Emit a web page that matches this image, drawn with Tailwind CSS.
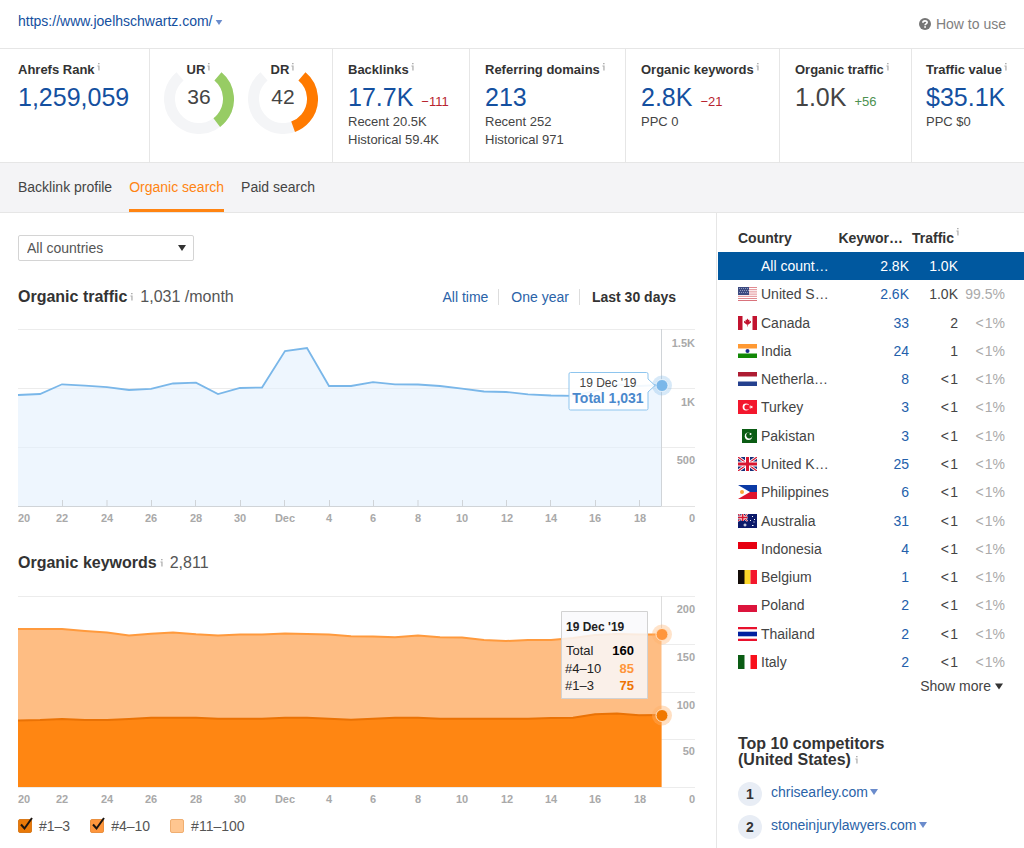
<!DOCTYPE html>
<html lang="en">
<head>
<meta charset="utf-8">
<meta name="viewport" content="width=device-width, initial-scale=1">
<title>Site overview</title>
<script src="https://cdn.jsdelivr.net/npm/@tailwindcss/browser@4"></script>
</head>
<body class="bg-white font-['Liberation_Sans',Arial,sans-serif] text-sm text-[#444]">

<!-- Shared symbols -->
<svg class="hidden" aria-hidden="true">
  <symbol id="info" viewBox="0 0 4 8"><path fill="#b0b0b0" d="M1 0h1.600v1.200H1zM.4 2.600h2.200V7.400H1.300V3.500H.4z"/></symbol>
  <symbol id="caret" viewBox="0 0 8 6"><path d="M0 0h8L4 6z"/></symbol>
  <symbol id="us" viewBox="0 0 19 14"><path fill="#fff" d="M0 0h19v14H0z"/><path stroke="#e08a90" d="M0 .5h19M0 2.700h19M0 4.900h19M0 7.100h19M0 9.300h19M0 11.500h19"/><path stroke="#d9737c" d="M0 13.500h19"/><path fill="#3c4a80" d="M0 0h11v8H0z"/><path stroke="#8f99bd" stroke-dasharray="1 1" d="M1 1.500h9M2 3.500h9M1 5.500h9"/></symbol>
  <symbol id="ca" viewBox="0 0 19 14"><path fill="#fff" d="M0 0h19v14H0z"/><path fill="#c2132f" d="M0 0h4.500v14H0zM14.500 0H19v14h-4.500zM9.500 2.500l1 1.600 1-.4-.2 2 1.700-.9 0 1.600-2.500 2.200-.7 0v1.900h-.6V8.600h-.7L6 6.400V4.800l1.700.9-.2-2 1 .4z"/></symbol>
  <symbol id="in" viewBox="0 0 19 14"><path fill="#fff" d="M0 0h19v14H0z"/><path fill="#f93" d="M0 0h19v4.500H0z"/><path fill="#128807" d="M0 9.500h19V14H0z"/><circle cx="9.500" cy="7" r="2" fill="#1a2a8c"/></symbol>
  <symbol id="nl" viewBox="0 0 19 14"><path fill="#fff" d="M0 0h19v14H0z"/><path fill="#ae1c32" d="M0 0h19v4.500H0z"/><path fill="#24408e" d="M0 9.500h19V14H0z"/></symbol>
  <symbol id="tr" viewBox="0 0 19 14"><path fill="#f3172d" d="M0 0h19v14H0z"/><circle cx="8" cy="7" r="3.400" fill="#fff"/><circle cx="9" cy="7" r="2.600" fill="#f3172d"/><path fill="#fff" d="M11 7l1.500-.5.1-1.400.9 1.100 1.400-.4-.8 1.200.8 1.200-1.400-.4-.9 1.100-.1-1.400z"/></symbol>
  <symbol id="pk" viewBox="0 0 19 14"><path fill="#fff" d="M0 0h19v14H0z"/><path fill="#0b5c14" d="M4 0h15v14H4z"/><circle cx="10.500" cy="7.300" r="3.700" fill="#fff"/><circle cx="11.300" cy="6.300" r="3.100" fill="#0b5c14"/><circle cx="12.500" cy="5" r="1" fill="#fff"/></symbol>
  <symbol id="gb" viewBox="0 0 19 14"><path fill="#17307a" d="M0 0h19v14H0z"/><path stroke="#fff" stroke-width="3" d="M0 0l19 14M19 0L0 14"/><path stroke="#d8152f" stroke-width="1.200" d="M0 0l19 14M19 0L0 14"/><path stroke="#fff" stroke-width="5" d="M9.500 0v14M0 7h19"/><path stroke="#d8152f" stroke-width="3" d="M9.500 0v14M0 7h19"/></symbol>
  <symbol id="ph" viewBox="0 0 19 14"><path fill="#0b3aa5" d="M0 0h19v7H0z"/><path fill="#e0142c" d="M0 7h19v7H0z"/><path fill="#fff" d="M0 0l12 7L0 14z"/><circle cx="4" cy="7" r="2" fill="#f9a63a"/></symbol>
  <symbol id="au" viewBox="0 0 19 14"><path fill="#0c1a6b" d="M0 0h19v14H0z"/><path stroke="#fff" stroke-width="1.800" d="M0 0l9.500 7M9.500 0L0 7"/><path stroke="#d8152f" stroke-width="1" d="M0 0l9.500 7M9.500 0L0 7"/><path stroke="#fff" stroke-width="2.600" d="M4.700 0v7M0 3.500h9.500"/><path stroke="#d8152f" stroke-width="1.600" d="M4.700 0v7M0 3.500h9.500"/><path fill="#fff" d="M6.500 9.500h1v1h1v1h-1v1h-1v-1h-1v-1h1zM14 2h1v1h-1zM12 6h1v1h-1zM16 5h1v1h-1zM14 11h1.500v1H14zM15.500 7.500h1v1h-1z"/></symbol>
  <symbol id="id" viewBox="0 0 19 14"><path fill="#fff" d="M0 0h19v14H0z"/><path fill="#e70011" d="M0 0h19v7H0z"/></symbol>
  <symbol id="be" viewBox="0 0 19 14"><path fill="#130c08" d="M0 0h7v14H0z"/><path fill="#fcd72a" d="M6.500 0h6v14h-6z"/><path fill="#f3172d" d="M12.500 0H19v14h-6.500z"/></symbol>
  <symbol id="pl" viewBox="0 0 19 14"><path fill="#fff" d="M0 0h19v14H0z"/><path fill="#dc143c" d="M0 7h19v7H0z"/></symbol>
  <symbol id="th" viewBox="0 0 19 14"><path fill="#fff" d="M0 0h19v14H0z"/><path fill="#e8112d" d="M0 0h19v2.200H0zM0 11.800h19V14H0z"/><path fill="#00209f" d="M0 4.700h19v4.600H0z"/></symbol>
  <symbol id="it" viewBox="0 0 19 14"><path fill="#fff" d="M0 0h19v14H0z"/><path fill="#0b5c14" d="M0 0h6.500v14H0z"/><path fill="#f8101c" d="M12.500 0H19v14h-6.500z"/></symbol>
</svg>

<header class="flex h-12 items-center justify-between pr-[18px] pl-[18px]">
  <a href="#" class="flex items-center gap-0.5 pb-1.5 text-[#1450a0]">https://www.joelhschwartz.com/
    <svg class="mt-0.5 h-[5px] w-2 fill-[#6b8ccc]"><use href="#caret"/></svg></a>
  <a href="#" class="flex items-center gap-[5px] text-[#808080]">
    <svg class="size-3" viewBox="0 0 12 12"><circle cx="6" cy="6" r="6" fill="#757575"/><path fill="none" stroke="#fff" stroke-width="1.700" d="M3.900 4.800c0-2.600 4.200-2.500 4.200-.3 0 1.400-2 1.300-2 2.700"/><path fill="#fff" d="M5.200 8.200h1.800v1.600H5.200z"/></svg>
    How to use</a>
</header>

<section class="grid h-[115px] grid-cols-[150fr_183fr_137fr_156fr_154fr_132fr_112fr] border-y border-[#e6e6e6] text-[13px] leading-[18px] *:border-r *:border-[#e6e6e6] *:pt-3">
  <div class="pl-[18px]">
    <h2 class="flex gap-0.5 font-bold text-[#333]">Ahrefs Rank<svg class="mt-0.5 h-2 w-1"><use href="#info"/></svg></h2>
    <a href="#" class="mt-0.5 block text-[25px] leading-8 text-[#1450a0]">1,259,059</a>
  </div>
  <div class="flex gap-3.5 pl-3.5">
    <div class="relative h-[74px] w-[70px]">
      <svg class="absolute top-[3px] left-0 size-[70px]" viewBox="0 0 70 70" fill="none" stroke-width="11"><g transform="rotate(-50 35 35)"><circle cx="35" cy="35" r="29.500" pathLength="360" stroke="#f4f5f7" stroke-dasharray="280 80"/><circle cx="35" cy="35" r="29.500" pathLength="360" stroke="#97cc64" stroke-dasharray="103 257"/></g></svg>
      <h2 class="relative flex justify-center gap-0.5 font-bold text-[#333]">UR<svg class="mt-0.5 h-2 w-1"><use href="#info"/></svg></h2>
      <p class="relative mt-0.5 text-center text-[21px] leading-8">36</p>
    </div>
    <div class="relative h-[74px] w-[70px]">
      <svg class="absolute top-[3px] left-0 size-[70px]" viewBox="0 0 70 70" fill="none" stroke-width="11"><g transform="rotate(-50 35 35)"><circle cx="35" cy="35" r="29.500" pathLength="360" stroke="#f4f5f7" stroke-dasharray="280 80"/><circle cx="35" cy="35" r="29.500" pathLength="360" stroke="#ff7a00" stroke-dasharray="120 240"/></g></svg>
      <h2 class="relative flex justify-center gap-0.5 font-bold text-[#333]">DR<svg class="mt-0.5 h-2 w-1"><use href="#info"/></svg></h2>
      <p class="relative mt-0.5 text-center text-[21px] leading-8">42</p>
    </div>
  </div>
  <div class="pl-[15px]">
    <h2 class="flex gap-0.5 font-bold text-[#333]">Backlinks<svg class="mt-0.5 h-2 w-1"><use href="#info"/></svg></h2>
    <p class="mt-0.5 flex h-8 items-baseline gap-2"><a href="#" class="text-[25px] leading-8 text-[#1450a0]">17.7K</a><span class="text-[#b8242f]">−111</span></p>
    <p>Recent 20.5K</p><p>Historical 59.4K</p>
  </div>
  <div class="pl-[15px]">
    <h2 class="flex gap-0.5 font-bold whitespace-nowrap text-[#333]">Referring domains<svg class="mt-0.5 h-2 w-1"><use href="#info"/></svg></h2>
    <a href="#" class="mt-0.5 block text-[25px] leading-8 text-[#1450a0]">213</a>
    <p>Recent 252</p><p>Historical 971</p>
  </div>
  <div class="pl-[15px]">
    <h2 class="flex gap-0.5 font-bold whitespace-nowrap text-[#333]">Organic keywords<svg class="mt-0.5 h-2 w-1"><use href="#info"/></svg></h2>
    <p class="mt-0.5 flex h-8 items-baseline gap-2"><a href="#" class="text-[25px] leading-8 text-[#1450a0]">2.8K</a><span class="text-[#b8242f]">−21</span></p>
    <p>PPC 0</p>
  </div>
  <div class="pl-[15px]">
    <h2 class="flex gap-0.5 font-bold whitespace-nowrap text-[#333]">Organic traffic<svg class="mt-0.5 h-2 w-1"><use href="#info"/></svg></h2>
    <p class="mt-0.5 flex h-8 items-baseline gap-2"><span class="text-[25px] leading-8">1.0K</span><span class="text-[#4c9150]">+56</span></p>
  </div>
  <div class="border-r-0! pl-3.5">
    <h2 class="flex gap-0.5 font-bold whitespace-nowrap text-[#333]">Traffic value<svg class="mt-0.5 h-2 w-1"><use href="#info"/></svg></h2>
    <a href="#" class="mt-0.5 block text-[25px] leading-8 text-[#1450a0]">$35.1K</a>
    <p>PPC $0</p>
  </div>
</section>

<nav class="flex h-[50px] items-stretch gap-[17px] border-b border-[#e6e6e6] bg-[#f4f4f6] pl-[18px] leading-[48px] text-[#444]">
  <a href="#">Backlink profile</a>
  <a href="#" class="border-b-[3px] border-[#ff8412] text-[#ff8412]">Organic search</a>
  <a href="#">Paid search</a>
</nav>

<main class="flex min-h-[635px]">
  <section class="min-w-0 flex-1 pt-[22px] pr-[21px] pl-[18px]">
    <div class="relative h-[26px] w-44">
      <select aria-label="Country" class="h-[26px] w-full appearance-none rounded-xs border border-[#d4d4d4] bg-white pl-2 text-[#555]"><option>All countries</option></select>
      <svg class="pointer-events-none absolute top-[10px] right-2 h-1.5 w-2 fill-[#333]"><use href="#caret"/></svg>
    </div>

    <div class="mt-6 flex h-6 items-center justify-between">
      <h2 class="flex items-center text-[#555]"><b class="text-base text-[#333]">Organic traffic</b><svg class="mr-1.5 ml-[3px] h-2 w-1"><use href="#info"/></svg><span class="text-base">1,031 /month</span></h2>
      <div class="flex items-center divide-x divide-[#ddd] pr-[19px] leading-4">
        <button class="pr-2.5 text-[#2a63a8]">All time</button>
        <button class="pr-2.5 pl-3 text-[#2a63a8]">One year</button>
        <button class="pl-3 font-bold text-[#333]">Last 30 days</button>
      </div>
    </div>

    <!-- Organic traffic -->
    <svg class="mt-4 block w-full overflow-visible" viewBox="0 0 677 202" role="img" aria-label="Organic traffic, last 30 days">
      <path stroke="#ececec" d="M0 4.500h677M0 63.500h677M0 122.500h677"/>
      <path fill="#e3f0fd" fill-opacity=".6" d="M0 181V70L22 69 44 59.300 67 60.700 89 62.200 111 65 133 63.800 155 58.500 178 57.600 200 69 222 63 244 62.500 267 26 289 23 311 61 333 61 355 57.200 377 59.300 400 59.500 422 61 444 63.700 466 66.500 488 67 510 69.300 533 70.500 555 70.800 577 66 599 59.500 621 61 643 60V181z"/>
      <path stroke="#d0d4d8" fill="none" d="M0 181.500h643.500V4"/><path stroke="#e2e2e2" d="M644 181.500h33"/>
      <path stroke="#d0d4d8" d="M44.500 175v6M89 175v6M133.500 175v6M177.500 175v6M222.500 175v6M266.500 175v6M311.500 175v6M355.500 175v6M400 175v6M444.500 175v6M488.500 175v6M532.500 175v6M577.500 175v6M621.500 175v6"/>
      <path fill="none" stroke="#7ab7e9" stroke-width="1.800" d="M0 70L22 69 44 59.300 67 60.700 89 62.200 111 65 133 63.800 155 58.500 178 57.600 200 69 222 63 244 62.500 267 26 289 23 311 61 333 61 355 57.200 377 59.300 400 59.500 422 61 444 63.700 466 66.500 488 67 510 69.300 533 70.500 555 70.800 577 66 599 59.500 621 61 643 60"/>
      <circle cx="644" cy="60.500" r="10" fill="#7ab7e9" fill-opacity=".3"/><circle cx="644" cy="60.500" r="6" fill="#7ab7e9" stroke="#fff" stroke-opacity=".7"/>
      <path fill="#fff" fill-opacity=".9" stroke="#8ec5ee" d="M552.500 47.500h76q1.500 0 1.500 1.500v5l7 6.500-7 6.500v16.500q0 1.500-1.500 1.500h-76q-1.500 0-1.500-1.500v-34.500q0-1.500 1.500-1.500z"/>
      <text x="590" y="62" text-anchor="middle" class="fill-[#444] text-[12px]">19 Dec '19</text>
      <text x="590" y="78" text-anchor="middle" class="fill-[#4a88cc] text-[14px] font-bold">Total 1,031</text>
      <g class="fill-[#a9a9a9] text-[11px] font-bold">
        <g text-anchor="end"><text x="677" y="22">1.5K</text><text x="677" y="81">1K</text><text x="677" y="139">500</text><text x="677" y="197">0</text></g>
        <g text-anchor="middle"><text x="6" y="197">20</text><text x="44" y="197">22</text><text x="89" y="197">24</text><text x="133" y="197">26</text><text x="178" y="197">28</text><text x="222" y="197">30</text><text x="267" y="197">Dec</text><text x="311" y="197">4</text><text x="355" y="197">6</text><text x="400" y="197">8</text><text x="444" y="197">10</text><text x="489" y="197">12</text><text x="533" y="197">14</text><text x="577" y="197">16</text><text x="622" y="197">18</text></g>
      </g>
    </svg>

    <h2 class="mt-6 flex h-6 items-center text-[#555]"><b class="text-base text-[#333]">Organic keywords</b><svg class="mr-1.5 ml-[3px] h-2 w-1"><use href="#info"/></svg><span class="text-base">2,811</span></h2>

    <!-- Organic keywords -->
    <svg class="mt-[17px] block w-full overflow-visible" viewBox="0 0 677 216" role="img" aria-label="Organic keywords, last 30 days">
      <path stroke="#ececec" d="M0 4.500h677M0 52.500h677M0 100.500h677M0 147.500h677M0 195.500h677"/>
      <path stroke="#ddd" d="M643.500 4v40"/>
      <path fill="#febd83" d="M0 195V37H44L67 39 89 40.500 111 43.500 133 41.700 155 40.500 178 42.300 200 43.500 222 42.500H244L267 41.500 289 42 311 42.500 333 44.200 355 44.500 377 45.300 400 43.500 422 45.200 444 45.500 466 48 488 49 510 48 533 48 555 46 577 43 599 42 621 42.500 643.500 42.500V195z"/>
      <path fill="#ff8612" d="M0 195V128.500L22 128 44 127 67 128H89L111 127 133 125.700H178L200 126.700H244L267 125.700H289L311 126.700 333 127.700 355 126.700 377 125.700H400L422 126.700H510L533 126 555 125.700 577 122.300 599 121.500 621 123.300 643.500 123V195z"/>
      <path fill="none" stroke="#ff9a3d" stroke-width="2" d="M0 37H44L67 39 89 40.500 111 43.500 133 41.700 155 40.500 178 42.300 200 43.500 222 42.500H244L267 41.500 289 42 311 42.500 333 44.200 355 44.500 377 45.300 400 43.500 422 45.200 444 45.500 466 48 488 49 510 48 533 48 555 46 577 43 599 42 621 42.500 643.500 42.500"/>
      <path fill="none" stroke="#ea7205" stroke-width="2" d="M0 128.500L22 128 44 127 67 128H89L111 127 133 125.700H178L200 126.700H244L267 125.700H289L311 126.700 333 127.700 355 126.700 377 125.700H400L422 126.700H510L533 126 555 125.700 577 122.300 599 121.500 621 123.300 643.500 123"/>
      <circle cx="644" cy="42.500" r="10" fill="#ffb066" fill-opacity=".35"/><circle cx="644" cy="42.500" r="6" fill="#ff963c" stroke="#ffe3c6"/>
      <circle cx="644" cy="123.500" r="10" fill="#ffb066" fill-opacity=".4"/><circle cx="644" cy="123.500" r="6" fill="#f07800" stroke="#ffe3c6"/>
      <path fill="#f9f9fb" fill-opacity=".85" stroke="#d2d2d2" d="M543.500 19.500h86v87h-86z"/>
      <g class="fill-[#222] text-[13px]">
        <text x="548" y="39" class="text-[12px] font-bold">19 Dec '19</text>
        <text x="548" y="63">Total</text><text x="547" y="81">#4–10</text><text x="547" y="98">#1–3</text>
      </g>
      <g class="fill-black text-[13px] font-bold" text-anchor="end"><text x="616" y="63">160</text><text x="616" y="81" class="fill-[#ff963c]">85</text><text x="616" y="98" class="fill-[#ee7403]">75</text></g>
      <g class="fill-[#a9a9a9] text-[11px] font-bold">
        <g text-anchor="end"><text x="677" y="21">200</text><text x="677" y="69">150</text><text x="677" y="117">100</text><text x="677" y="163">50</text><text x="677" y="211">0</text></g>
        <g text-anchor="middle"><text x="6" y="211">20</text><text x="44" y="211">22</text><text x="89" y="211">24</text><text x="133" y="211">26</text><text x="178" y="211">28</text><text x="222" y="211">30</text><text x="267" y="211">Dec</text><text x="311" y="211">4</text><text x="355" y="211">6</text><text x="400" y="211">8</text><text x="444" y="211">10</text><text x="489" y="211">12</text><text x="533" y="211">14</text><text x="577" y="211">16</text><text x="622" y="211">18</text></g>
      </g>
    </svg>

    <div class="mt-2 flex gap-5 leading-5 text-[#555]">
      <label class="relative flex items-center gap-[7px]"><input type="checkbox" checked class="peer size-3.5 appearance-none rounded-xs border border-[#d97a1c] bg-[#e97908]"><svg class="absolute top-0 left-0.5 hidden h-4 w-[13px] peer-checked:block" viewBox="0 0 13 16" fill="none" stroke="#1d1510" stroke-width="2"><path d="M1 8.500l3.500 4L12 2"/></svg>#1–3</label>
      <label class="relative flex items-center gap-[7px]"><input type="checkbox" checked class="peer size-3.5 appearance-none rounded-xs border border-[#e99040] bg-[#ff963c]"><svg class="absolute top-0 left-0.5 hidden h-4 w-[13px] peer-checked:block" viewBox="0 0 13 16" fill="none" stroke="#1d1510" stroke-width="2"><path d="M1 8.500l3.500 4L12 2"/></svg>#4–10</label>
      <label class="relative flex items-center gap-[7px]"><input type="checkbox" class="peer size-3.5 appearance-none rounded-xs border border-[#f0ae70] bg-[#ffc690]">#11–100</label>
    </div>
  </section>

  <aside class="w-[308px] shrink-0 border-l border-[#e6e6e6] pt-[11px] pl-px">
    <table class="h-[452px] w-full table-fixed border-collapse text-right whitespace-nowrap [&_td]:p-0 [&_th]:p-0 [&_tr]:h-7 [&_td:nth-child(1)]:pl-5 [&_td:nth-child(1)]:text-left [&_td:nth-child(4)]:pr-[19px] [&_td:nth-child(4)]:text-[#aaa] [&_td:nth-child(2)]:text-[#2360ab]">
      <colgroup><col class="w-[111px]"><col class="w-20"><col class="w-[49px]"><col></colgroup>
      <thead class="text-[#333]">
        <tr><th scope="col"><span class="block pl-5 text-left">Country</span></th><th scope="col"><span class="block pr-1.5">Keywor…</span></th><th scope="col" colspan="2"><span class="flex gap-0.5 pl-[3px]">Traffic<svg class="h-2 w-1"><use href="#info"/></svg></span></th></tr>
      </thead>
      <tbody>
        <tr class="bg-[#00589f] text-white [&>td:nth-child(2)]:text-white!"><td><span class="block pl-[23px]">All count…</span></td><td>2.8K</td><td>1.0K</td><td></td></tr>
        <tr><td><span class="flex items-center gap-1"><svg class="h-3.5 w-[19px]"><use href="#us"/></svg>United S…</span></td><td>2.6K</td><td>1.0K</td><td>99.5%</td></tr>
        <tr><td><span class="flex items-center gap-1"><svg class="h-3.5 w-[19px]"><use href="#ca"/></svg>Canada</span></td><td>33</td><td>2</td><td>&lt;&#8202;1%</td></tr>
        <tr><td><span class="flex items-center gap-1"><svg class="h-3.5 w-[19px]"><use href="#in"/></svg>India</span></td><td>24</td><td>1</td><td>&lt;&#8202;1%</td></tr>
        <tr><td><span class="flex items-center gap-1"><svg class="h-3.5 w-[19px]"><use href="#nl"/></svg>Netherla…</span></td><td>8</td><td>&lt;&#8202;1</td><td>&lt;&#8202;1%</td></tr>
        <tr><td><span class="flex items-center gap-1"><svg class="h-3.5 w-[19px]"><use href="#tr"/></svg>Turkey</span></td><td>3</td><td>&lt;&#8202;1</td><td>&lt;&#8202;1%</td></tr>
        <tr><td><span class="flex items-center gap-1"><svg class="h-3.5 w-[19px]"><use href="#pk"/></svg>Pakistan</span></td><td>3</td><td>&lt;&#8202;1</td><td>&lt;&#8202;1%</td></tr>
        <tr><td><span class="flex items-center gap-1"><svg class="h-3.5 w-[19px]"><use href="#gb"/></svg>United K…</span></td><td>25</td><td>&lt;&#8202;1</td><td>&lt;&#8202;1%</td></tr>
        <tr><td><span class="flex items-center gap-1"><svg class="h-3.5 w-[19px]"><use href="#ph"/></svg>Philippines</span></td><td>6</td><td>&lt;&#8202;1</td><td>&lt;&#8202;1%</td></tr>
        <tr><td><span class="flex items-center gap-1"><svg class="h-3.5 w-[19px]"><use href="#au"/></svg>Australia</span></td><td>31</td><td>&lt;&#8202;1</td><td>&lt;&#8202;1%</td></tr>
        <tr><td><span class="flex items-center gap-1"><svg class="h-3.5 w-[19px]"><use href="#id"/></svg>Indonesia</span></td><td>4</td><td>&lt;&#8202;1</td><td>&lt;&#8202;1%</td></tr>
        <tr><td><span class="flex items-center gap-1"><svg class="h-3.5 w-[19px]"><use href="#be"/></svg>Belgium</span></td><td>1</td><td>&lt;&#8202;1</td><td>&lt;&#8202;1%</td></tr>
        <tr><td><span class="flex items-center gap-1"><svg class="h-3.5 w-[19px]"><use href="#pl"/></svg>Poland</span></td><td>2</td><td>&lt;&#8202;1</td><td>&lt;&#8202;1%</td></tr>
        <tr><td><span class="flex items-center gap-1"><svg class="h-3.5 w-[19px]"><use href="#th"/></svg>Thailand</span></td><td>2</td><td>&lt;&#8202;1</td><td>&lt;&#8202;1%</td></tr>
        <tr><td><span class="flex items-center gap-1"><svg class="h-3.5 w-[19px]"><use href="#it"/></svg>Italy</span></td><td>2</td><td>&lt;&#8202;1</td><td>&lt;&#8202;1%</td></tr>
      </tbody>
    </table>
    <button class="ml-auto flex items-center gap-1 pr-[21px] leading-5">Show more<svg class="h-[7px] w-2 fill-[#333]"><use href="#caret"/></svg></button>

    <div class="pt-10 pl-5">
      <h2 class="text-base leading-4 font-bold text-[#333]">Top 10 competitors<br><span class="flex items-center gap-1">(United States)<svg class="h-2 w-1"><use href="#info"/></svg></span></h2>
      <ol class="mt-3.5 flex flex-col gap-[9px]">
        <li class="flex gap-[9px]"><span class="size-6 rounded-full bg-[#e8edf5] text-center leading-6 font-bold text-[#333]">1</span><a href="#" class="flex items-center gap-0.5 pb-1 leading-5 text-[#2a63a8]">chrisearley.com<svg class="h-1.5 w-2 fill-[#6b8ccc]"><use href="#caret"/></svg></a></li>
        <li class="flex gap-[9px]"><span class="size-6 rounded-full bg-[#e8edf5] text-center leading-6 font-bold text-[#333]">2</span><a href="#" class="flex items-center gap-0.5 pb-1 leading-5 text-[#2a63a8]">stoneinjurylawyers.com<svg class="h-1.5 w-2 fill-[#6b8ccc]"><use href="#caret"/></svg></a></li>
      </ol>
    </div>
  </aside>
</main>
</body>
</html>
